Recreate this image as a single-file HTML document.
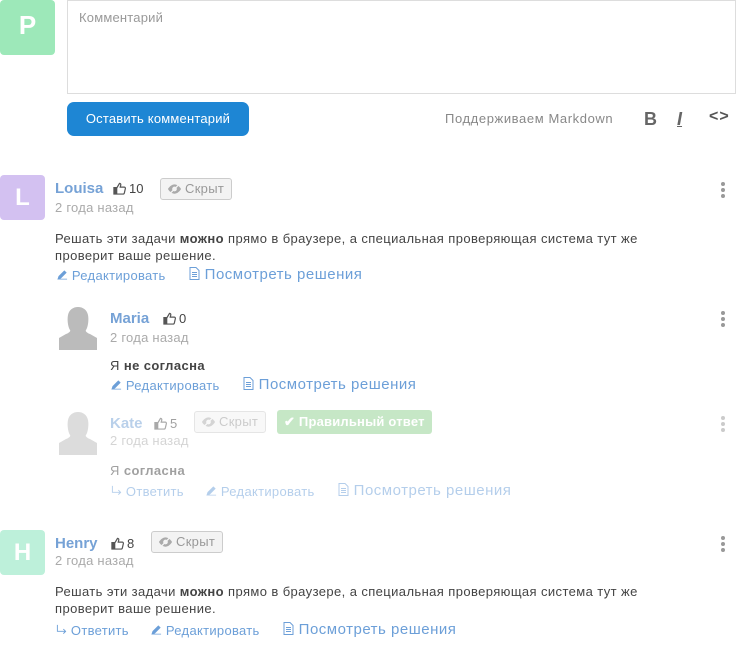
<!DOCTYPE html>
<html><head><meta charset="utf-8"><style>
*{margin:0;padding:0;box-sizing:border-box}
body{width:736px;height:649px;background:#fff;font-family:"Liberation Sans",sans-serif;position:relative;overflow:hidden;color:#333}
.a{position:absolute;white-space:nowrap}
.av{position:absolute;border-radius:4px;color:#fff;text-align:center;font-weight:bold}
.name{position:absolute;font-size:15px;font-weight:bold;color:#76a2d6}
.date{position:absolute;font-size:13px;color:#aaa;letter-spacing:.25px}
.txt{position:absolute;font-size:13px;color:#444;line-height:17px;letter-spacing:.4px;white-space:nowrap}
.lk{position:absolute;font-size:13px;color:#6c9fd8;white-space:nowrap;letter-spacing:.3px}
.lk2{position:absolute;font-size:15px;color:#6c9fd8;white-space:nowrap;letter-spacing:.5px}
.hid{position:absolute;height:22px;border:1px solid #ccc;border-radius:3px;background:#f3f3f3;color:#999;font-size:13px;line-height:20px;padding-left:24px;padding-right:7px;letter-spacing:.3px}
.hid svg{position:absolute;left:6px;top:4px}
.likes{position:absolute;font-size:13px;color:#444}
.likes svg{vertical-align:-2px;margin-right:3px}
.dots{position:absolute;width:4px}
.dots i{display:block;width:4px;height:4px;border-radius:2px;background:#999;margin-bottom:2px}
.fade{opacity:.5}
</style></head><body>

<div class="av" style="left:0;top:0;width:55px;height:55px;background:#9de8b9;font-size:26px;line-height:50px">P</div>
<div class="a" style="left:67px;top:0;width:669px;height:94px;border:1px solid #ddd"></div>
<div class="a" style="left:79px;top:10px;font-size:13px;color:#999;letter-spacing:.2px">Комментарий</div>
<div class="a" style="left:67px;top:102px;width:182px;height:34px;background:#1e86d4;border-radius:7px;color:#fff;font-size:13px;line-height:34px;text-align:center;letter-spacing:.2px">Оставить комментарий</div>
<div class="a" style="left:445px;top:111px;font-size:13px;color:#888;letter-spacing:.6px">Поддерживаем Markdown</div>
<div class="a" style="left:644px;top:109px;font-size:18px;font-weight:bold;color:#666">B</div>
<div class="a" style="left:677px;top:109px;font-size:18px;font-weight:bold;font-style:italic;color:#666;text-decoration:underline">I</div>
<div class="a" style="left:709px;top:108px;font-size:16px;font-weight:bold;color:#555;letter-spacing:1px">&lt;&gt;</div>

<svg width="0" height="0" style="position:absolute"><defs>
<symbol id="th" viewBox="0 0 14 14"><path d="M1 6h3v7H1zM4 6.5L7 1.5c1.2 0 1.6.8 1.3 2L7.8 5.5H12c1 0 1.5.8 1.3 1.6l-1.1 4.8c-.2.7-.7 1.1-1.4 1.1H4" fill="none" stroke="#555" stroke-width="1.3"/><rect x="1" y="6" width="3" height="7" fill="#555"/></symbol>
<symbol id="eye" viewBox="0 0 16 12"><path d="M1 6c2-3.5 5-5 7-5s5 1.5 7 5c-2 3.5-5 5-7 5S3 9.5 1 6z" fill="#aaa"/><circle cx="8" cy="6" r="2.5" fill="#f3f3f3"/><path d="M3 11L13 1" stroke="#f3f3f3" stroke-width="1.5"/></symbol>
<symbol id="pen" viewBox="0 0 12 12"><path d="M1 11l1-3 6-6 2 2-6 6zM1 11h10" fill="#6c9fd8" stroke="#6c9fd8" stroke-width=".8"/></symbol>
<symbol id="doc" viewBox="0 0 10 13"><path d="M.5.5h6l3 3v9h-9z" fill="none" stroke="#6c9fd8"/><path d="M2.5 5.5h5M2.5 7.5h5M2.5 9.5h5" stroke="#6c9fd8"/></symbol>
<symbol id="rep" viewBox="0 0 12 12"><path d="M1.5 1v7h9M8 5.5l2.5 2.5L8 10.5" fill="none" stroke="#6c9fd8" stroke-width="1"/></symbol>
<symbol id="sil" viewBox="0 0 40 44"><path d="M12 24c-2-3-3-10-2-15 1-5 5-8 10-8s9 3 10 8c1 5 0 12-2 15-1 1 1 3 4 4l7 4v12H1V32l7-4c3-1 5-3 4-4z" fill="#bbb"/></symbol>
</defs></svg>

<!-- Louisa -->
<div class="av" style="left:0;top:175px;width:45px;height:45px;background:#d3c1f1;font-size:24px;line-height:45px">L</div>
<div class="name" style="left:55px;top:180px">Louisa</div>
<div class="likes" style="left:113px;top:181px"><svg width="13" height="13"><use href="#th"/></svg>10</div>
<div class="hid" style="left:160px;top:178px">Скрыт<svg width="15" height="12"><use href="#eye"/></svg></div>
<div class="date" style="left:55px;top:200px">2 года назад</div>
<div class="txt" style="left:55px;top:230px">Решать эти задачи <b>можно</b> прямо в браузере, а специальная проверяющая система тут же<br>проверит ваше решение.</div>
<div class="lk" style="left:57px;top:268px"><svg width="11" height="11"><use href="#pen"/></svg> Редактировать</div>
<div class="lk2" style="left:189px;top:266px"><svg width="11" height="13" style="vertical-align:-1px"><use href="#doc"/></svg> Посмотреть решения</div>
<div class="dots" style="left:721px;top:182px"><i></i><i></i><i></i></div>

<!-- Maria -->
<svg class="a" style="left:58px;top:306px" width="40" height="44"><use href="#sil"/></svg>
<div class="name" style="left:110px;top:310px">Maria</div>
<div class="likes" style="left:163px;top:311px"><svg width="13" height="13"><use href="#th"/></svg>0</div>
<div class="date" style="left:110px;top:330px">2 года назад</div>
<div class="txt" style="left:110px;top:357px">Я <b>не согласна</b></div>
<div class="lk" style="left:111px;top:378px"><svg width="11" height="11"><use href="#pen"/></svg> Редактировать</div>
<div class="lk2" style="left:243px;top:376px"><svg width="11" height="13" style="vertical-align:-1px"><use href="#doc"/></svg> Посмотреть решения</div>
<div class="dots" style="left:721px;top:311px"><i></i><i></i><i></i></div>

<!-- Kate -->
<div class="fade">
<svg class="a" style="left:58px;top:411px" width="40" height="44"><use href="#sil"/></svg>
<div class="name" style="left:110px;top:415px">Kate</div>
<div class="likes" style="left:154px;top:416px"><svg width="13" height="13"><use href="#th"/></svg>5</div>
<div class="hid" style="left:194px;top:411px">Скрыт<svg width="15" height="12"><use href="#eye"/></svg></div>
<div class="a" style="left:277px;top:410px;height:24px;background:#8fd18f;border-radius:3px;color:#fff;font-size:13px;font-weight:bold;line-height:24px;padding:0 7px;letter-spacing:.2px">✔ Правильный ответ</div>
<div class="date" style="left:110px;top:433px">2 года назад</div>
<div class="txt" style="left:110px;top:462px">Я <b>согласна</b></div>
<div class="lk" style="left:111px;top:484px"><svg width="11" height="11"><use href="#rep"/></svg> Ответить</div>
<div class="lk" style="left:206px;top:484px"><svg width="11" height="11"><use href="#pen"/></svg> Редактировать</div>
<div class="lk2" style="left:338px;top:482px"><svg width="11" height="13" style="vertical-align:-1px"><use href="#doc"/></svg> Посмотреть решения</div>
<div class="dots" style="left:721px;top:416px"><i></i><i></i><i></i></div>
</div>

<!-- Henry -->
<div class="av" style="left:0;top:530px;width:45px;height:45px;background:#bdf0da;font-size:24px;line-height:45px">H</div>
<div class="name" style="left:55px;top:535px">Henry</div>
<div class="likes" style="left:111px;top:536px"><svg width="13" height="13"><use href="#th"/></svg>8</div>
<div class="hid" style="left:151px;top:531px">Скрыт<svg width="15" height="12"><use href="#eye"/></svg></div>
<div class="date" style="left:55px;top:553px">2 года назад</div>
<div class="txt" style="left:55px;top:583px">Решать эти задачи <b>можно</b> прямо в браузере, а специальная проверяющая система тут же<br>проверит ваше решение.</div>
<div class="lk" style="left:56px;top:623px"><svg width="11" height="11"><use href="#rep"/></svg> Ответить</div>
<div class="lk" style="left:151px;top:623px"><svg width="11" height="11"><use href="#pen"/></svg> Редактировать</div>
<div class="lk2" style="left:283px;top:621px"><svg width="11" height="13" style="vertical-align:-1px"><use href="#doc"/></svg> Посмотреть решения</div>
<div class="dots" style="left:721px;top:536px"><i></i><i></i><i></i></div>

</body></html>
